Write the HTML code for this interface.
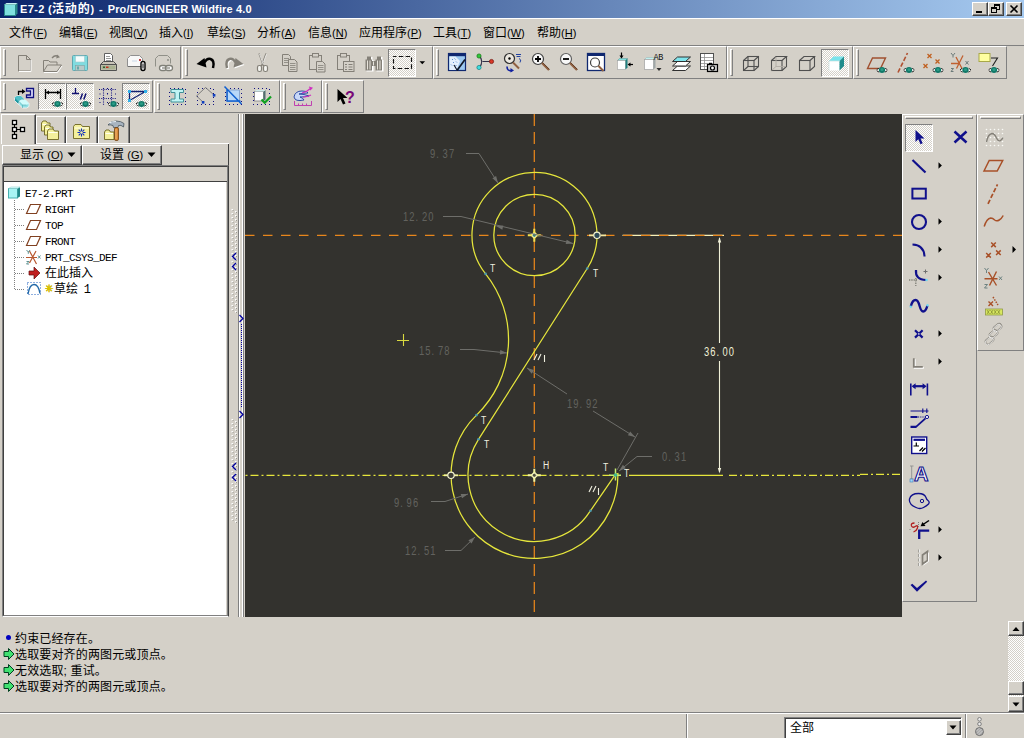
<!DOCTYPE html>
<html><head><meta charset="utf-8"><title>Pro/ENGINEER</title><style>
*{box-sizing:border-box;margin:0;padding:0}
html,body{width:1024px;height:738px;overflow:hidden;background:#d4d0c8;}
body{position:relative;font-family:"Liberation Sans","Noto Sans CJK SC",sans-serif;font-size:12px;color:#000;}
.a{position:absolute}
.tb{position:absolute;border-top:1px solid #fff;border-left:1px solid #fff;border-right:1px solid #808080;border-bottom:1px solid #808080;background:#d4d0c8}
.grip{position:absolute;width:3px;border-top:1px solid #fff;border-left:1px solid #fff;border-right:1px solid #808080;border-bottom:1px solid #808080}
.hgrip{position:absolute;height:3px;border-top:1px solid #fff;border-left:1px solid #fff;border-right:1px solid #808080;border-bottom:1px solid #808080}
.ic{position:absolute;width:28px;height:28px;overflow:visible}
.pr{position:absolute;width:28px;height:28px;border-top:1px solid #808080;border-left:1px solid #808080;border-right:1px solid #fff;border-bottom:1px solid #fff;
 background-color:#fff;background-image:linear-gradient(45deg,#d4d0c8 25%,transparent 25%,transparent 75%,#d4d0c8 75%),linear-gradient(45deg,#d4d0c8 25%,transparent 25%,transparent 75%,#d4d0c8 75%);background-size:2px 2px;background-position:0 0,1px 1px}
.menu span{position:absolute;top:0;white-space:nowrap;font-size:12px;line-height:14px}
.menu i{font-style:normal;font-size:11px}
.menu u{text-decoration:underline;text-underline-offset:1px}
.cj{font-family:"Liberation Sans","Noto Sans CJK SC",sans-serif}
.tree{font-family:"Liberation Mono","Noto Sans CJK SC",monospace;font-size:11px;letter-spacing:-0.6px;white-space:nowrap;line-height:14px;transform:scaleY(1.04);transform-origin:0 100%}
.tree.cj{font-family:"Liberation Sans","Noto Sans CJK SC",sans-serif;font-size:12px;letter-spacing:0;transform:none}
.tree.cj b{font-weight:normal;font-family:"Liberation Mono",monospace;font-size:12px;letter-spacing:-1.5px}
.msg{position:absolute;left:15px;font-size:12px;line-height:14px;white-space:nowrap;letter-spacing:0.15px}
.wb{position:absolute;top:2px;width:16px;height:14px;background:#d4d0c8;border-top:1px solid #fff;border-left:1px solid #fff;border-right:1px solid #404040;border-bottom:1px solid #404040;box-shadow:inset -1px -1px 0 #808080}
.raised{border-top:1px solid #fff;border-left:1px solid #fff;border-right:1px solid #404040;border-bottom:1px solid #404040;box-shadow:inset -1px -1px 0 #808080;background:#d4d0c8}
</style></head><body>
<div class="a" style="left:0;top:0;width:1024px;height:18px;background:linear-gradient(90deg,#0a246a,#a6caf0)"></div>
<svg class="a" style="left:3px;top:2px" width="16" height="15" viewBox="0 0 16 15"><rect x="1.5" y="2.5" width="11" height="11" fill="#7fe0e0" stroke="#2a8a8a"/><path d="M12.5 2.5l2 -1.5v10.5l-2 2z" fill="#2a8a8a"/><path d="M1.5 2.5l2-1.500h11l-2 1.500z" fill="#c8f4f4"/></svg>
<div id="ttl" class="a" style="left:20px;top:1.5px;font-size:11px;line-height:14px;font-weight:bold;color:#fff;white-space:nowrap;letter-spacing:0.2px"><span id="t1" style="letter-spacing:0.35px">E7-2 (</span><span id="t2" style="font-size:12px;letter-spacing:0.8px">活动的</span><span id="t3" style="letter-spacing:0.95px">) - </span><span id="t4" style="letter-spacing:0.14px">Pro/ENGINEER Wildfire 4.0</span></div>
<div class="wb" style="left:972px"><svg class="a" style="left:0;top:0" width="14" height="12"><rect x="3" y="8" width="6" height="2" fill="#000"/></svg></div>
<div class="wb" style="left:988px"><svg class="a" style="left:0;top:0" width="14" height="12" fill="none" stroke="#000"><rect x="5.500" y="1.500" width="5" height="5"/><path d="M5 2.500h6" /><rect x="2.500" y="4.500" width="5" height="5" fill="#d4d0c8"/><path d="M2 5.500h6"/></svg></div>
<div class="wb" style="left:1006px"><svg class="a" style="left:0;top:0" width="14" height="12" stroke="#000" stroke-width="1.6"><path d="M3.500 2.500l7 7M10.500 2.500l-7 7"/></svg></div>
<div class="a menu" style="left:0;top:18px;width:1024px;height:27px;background:#d4d0c8;border-top:1px solid #fff"></div>
<div class="a menu" style="left:9px;top:26px"><span>文件<i>(<u>F</u>)</i></span></div>
<div class="a menu" style="left:59px;top:26px"><span>编辑<i>(<u>E</u>)</i></span></div>
<div class="a menu" style="left:109px;top:26px"><span>视图<i>(<u>V</u>)</i></span></div>
<div class="a menu" style="left:159px;top:26px"><span>插入<i>(<u>I</u>)</i></span></div>
<div class="a menu" style="left:207px;top:26px"><span>草绘<i>(<u>S</u>)</i></span></div>
<div class="a menu" style="left:257px;top:26px"><span>分析<i>(<u>A</u>)</i></span></div>
<div class="a menu" style="left:308px;top:26px"><span>信息<i>(<u>N</u>)</i></span></div>
<div class="a menu" style="left:359px;top:26px"><span>应用程序<i>(<u>P</u>)</i></span></div>
<div class="a menu" style="left:433px;top:26px"><span>工具<i>(<u>T</u>)</i></span></div>
<div class="a menu" style="left:483px;top:26px"><span>窗口<i>(<u>W</u>)</i></span></div>
<div class="a menu" style="left:537px;top:26px"><span>帮助<i>(<u>H</u>)</i></span></div>
<div class="a" style="left:0;top:45px;width:1024px;height:1px;background:#808080"></div>
<div class="tb" style="left:0px;top:46px;width:181px;height:33px"></div>
<div class="grip" style="left:3px;top:49px;height:27px"></div>
<svg class="ic" style="left:10px;top:49px" viewBox="0 0 28 28"><path d="M8.500 6.500h8l4 4v11.500h-12z" fill="#d4d0c8" stroke="#848078"/><path d="M16.500 6.500v4h4" fill="none" stroke="#848078"/><path d="M9 22.500h12M21 11v11.500" stroke="#fff" fill="none"/></svg>
<svg class="ic" style="left:38px;top:49px" viewBox="0 0 28 28"><path d="M5.500 22.500v-11h5l1.500 1.500h7v3" fill="#d4d0c8" stroke="#848078"/><path d="M5.500 22.500l4 -6.500h14l-4.500 6.500z" fill="#d4d0c8" stroke="#848078"/><path d="M14 9q3 -3.500 6.500 -1.500" fill="none" stroke="#848078" stroke-width="1.300"/><path d="M19 5.500l3 2.800l-3.800 1.200z" fill="#848078"/><path d="M6 23.500h13.500l4.500 -6.500" stroke="#fff" fill="none"/></svg>
<svg class="ic" style="left:66px;top:49px" viewBox="0 0 28 28"><rect x="6.500" y="6.500" width="15" height="15" rx="1" fill="#80dce0" stroke="#60a8b0"/><rect x="9.500" y="7" width="9" height="6" fill="#f4fcfc" stroke="#a0c8cc" stroke-width="0.600"/><rect x="9.500" y="16.500" width="9" height="5" fill="#b8c8c8" stroke="#80a0a0" stroke-width="0.600"/><rect x="11" y="17.500" width="2" height="3" fill="#6aa"/></svg>
<svg class="ic" style="left:94px;top:49px" viewBox="0 0 28 28"><path d="M10.500 12.500v-8h6l2 2v6" fill="#fff" stroke="#606060"/><path d="M12 7.500h4M12 9.500h5M12 11.500h5" stroke="#808080" stroke-width="0.800"/><path d="M6.500 15.500l3 -3h10l3 3v6h-16z" fill="#c8c4b8" stroke="#505050"/><path d="M6.500 15.500h16" stroke="#505050"/><rect x="7.500" y="16.500" width="14" height="4" fill="#a8b090" stroke="none"/><rect x="9" y="17.500" width="2" height="1.500" fill="#306030"/><rect x="12" y="17.500" width="2.500" height="1.500" fill="#c03020"/></svg>
<svg class="ic" style="left:122px;top:49px" viewBox="0 0 28 28"><path d="M5.500 17.500v-8l3 -3h9l3 3v8z" fill="#f8f8f8" stroke="#909090"/><path d="M6 17.500h14" stroke="#707070"/><rect x="17" y="10" width="2" height="2" fill="#c04040"/><path d="M10 12h5" stroke="#c8d8e8"/><rect x="19" y="12.500" width="4" height="9" rx="2" fill="#fff" stroke="#000" stroke-width="1.400"/><path d="M21 14.500v5" stroke="#000" stroke-width="1"/></svg>
<svg class="ic" style="left:150px;top:49px" viewBox="0 0 28 28"><path d="M5.500 17.500v-8l3 -3h9l3 3v5" fill="#d4d0c8" stroke="#909088"/><rect x="17" y="10" width="2" height="2" fill="#a0a098"/><rect x="9.500" y="16.500" width="7" height="5" rx="2.500" fill="#fff" stroke="#808078" stroke-width="1.300"/><rect x="15.500" y="16.500" width="7" height="5" rx="2.500" fill="#fff" stroke="#808078" stroke-width="1.300"/><path d="M12 19h8" stroke="#808078" stroke-width="1.200"/></svg>
<div class="tb" style="left:182px;top:46px;width:251px;height:33px"></div>
<div class="grip" style="left:185px;top:49px;height:27px"></div>
<svg class="ic" style="left:192px;top:49px" viewBox="0 0 28 28"><path d="M12.500 13.500q2.500 -4.500 6 -3.500q4.500 1.500 2.500 9" fill="none" stroke="#000" stroke-width="2.500"/><path d="M4.500 15l8 -6l2 9.500z" fill="#000"/></svg>
<svg class="ic" style="left:220px;top:49px" viewBox="0 0 28 28"><path d="M16.500 14.500q-2.500 -4.500 -6 -3.500q-4.500 1.500 -2.500 9" fill="none" stroke="#fff" stroke-width="2.500"/><path d="M24.500 16l-8 -6l-2 9.500z" fill="#fff"/><path d="M15.500 13.500q-2.500 -4.500 -6 -3.500q-4.500 1.500 -2.500 9" fill="none" stroke="#848078" stroke-width="2.500"/><path d="M23.500 15l-8 -6l-2 9.500z" fill="#848078"/></svg>
<svg class="ic" style="left:248px;top:49px" viewBox="0 0 28 28"><path d="M11 4.500l3.800 10.500l-2.300 2.500M18 4.500l-3.800 10.500l2.300 2.500" fill="none" stroke="#848078" stroke-width="1.300"/><path d="M11.500 5l3.800 10.500M18.500 5l-3 8" fill="none" stroke="#fff" stroke-width="0.700"/><rect x="9.500" y="16.500" width="4" height="6" rx="1.800" fill="#f4f4f0" stroke="#848078" stroke-width="1.200"/><rect x="15.500" y="16.500" width="4" height="6" rx="1.800" fill="#f4f4f0" stroke="#848078" stroke-width="1.200"/></svg>
<svg class="ic" style="left:276px;top:49px" viewBox="0 0 28 28"><path d="M6.500 5.500h6l2 2v9h-8z" fill="#d4d0c8" stroke="#848078"/><path d="M8 9.500h5M8 11.500h5M8 13.500h5" stroke="#848078" stroke-width="0.800"/><path d="M12.500 10.500h6l2.500 2.500v9.500h-8.500z" fill="#d4d0c8" stroke="#848078"/><path d="M14 14.500h5.500M14 16.500h5.500M14 18.500h5.500M14 20.500h5.500" stroke="#848078" stroke-width="0.800"/></svg>
<svg class="ic" style="left:304px;top:49px" viewBox="0 0 28 28"><rect x="5.500" y="6.500" width="12" height="14" fill="#d4d0c8" stroke="#848078"/><rect x="8.500" y="4.500" width="6" height="3.500" fill="#d4d0c8" stroke="#848078"/><path d="M12.500 12.500h6l2.500 2.500v8h-8.500z" fill="#d4d0c8" stroke="#848078"/><path d="M14 16.500h5.500M14 18.500h5.500M14 20.500h5.500" stroke="#848078" stroke-width="0.800"/></svg>
<svg class="ic" style="left:332px;top:49px" viewBox="0 0 28 28"><rect x="5.500" y="6.500" width="12" height="14" fill="#d4d0c8" stroke="#848078"/><rect x="8.500" y="4.500" width="6" height="3.500" fill="#d4d0c8" stroke="#848078"/><rect x="11.500" y="12.500" width="10.500" height="10" fill="#d4d0c8" stroke="#848078"/><path d="M13 15.500h2M16.500 15.500h4M13 18h2M16.500 18h4M13 20.500h2M16.500 20.500h4" stroke="#848078" stroke-width="1.100"/></svg>
<svg class="ic" style="left:360px;top:49px" viewBox="0 0 28 28"><g fill="#fff"><rect x="6.500" y="11" width="7" height="11.500"/><rect x="16.500" y="11" width="7" height="11.500"/><rect x="8.500" y="8" width="4" height="4"/><rect x="18.500" y="8" width="4" height="4"/></g><g fill="#848078"><rect x="5.500" y="10.500" width="6.500" height="11"/><rect x="15.500" y="10.500" width="6.500" height="11"/><rect x="7" y="7.500" width="4" height="3.500"/><rect x="17" y="7.500" width="4" height="3.500"/><rect x="11.500" y="12" width="4.500" height="5"/></g><path d="M7.500 11.500v9M10 11.500v9M17.500 11.500v9M20 11.500v9M13.500 12.500v4" stroke="#e8e4dc" stroke-width="1"/></svg>
<div class="pr" style="left:388px;top:49px;height:28px"></div><svg class="ic" style="left:388px;top:49px" viewBox="0 0 28 28"><rect x="5.500" y="7.500" width="18" height="12" fill="none" stroke="#101010" stroke-width="1.150" stroke-dasharray="4.500 2.300" stroke-dashoffset="1.500"/></svg>
<svg class="a" style="left:419px;top:61px" width="7" height="4"><path d="M0.500 0.300h5.600l-2.800 3z" fill="#000"/></svg>
<div class="tb" style="left:433px;top:46px;width:294px;height:33px"></div>
<div class="grip" style="left:436px;top:49px;height:27px"></div>
<svg class="ic" style="left:443px;top:48px" viewBox="0 0 28 28"><rect x="5.500" y="5.500" width="17" height="17" fill="#9cc8f0" stroke="#102870" stroke-width="1.200"/><rect x="5" y="5" width="18" height="3.200" fill="#102870"/><path d="M6.500 22l0 -13.500h6l4.500 4.500l-3.500 9z" fill="#e4f0fc"/><path d="M14 22.500l8 -11" stroke="#101828" stroke-width="1.700"/><path d="M14 22l-3 -5" stroke="#101828" stroke-width="1.200"/><path d="M9 11l1 1M11.500 10.500l1 1M10 14l1 1M13 13.500l1 1M8 16.500l1 1M12.500 17l1 1" stroke="#6090d0" stroke-width="1"/></svg>
<svg class="ic" style="left:471px;top:48px" viewBox="0 0 28 28"><path d="M8.500 8q4.500 5.500 0 11.500M11.500 13.500h9" fill="none" stroke="#303048" stroke-width="1.200"/><circle cx="8" cy="8" r="2.100" fill="#30c838" stroke="#107010" stroke-width="0.700"/><circle cx="8" cy="19.500" r="2.100" fill="#40dce0" stroke="#108080" stroke-width="0.700"/><circle cx="20.500" cy="13.500" r="2.100" fill="#d83828" stroke="#701008" stroke-width="0.700"/></svg>
<svg class="ic" style="left:499px;top:48px" viewBox="0 0 28 28"><circle cx="10.500" cy="10.500" r="5" fill="#ece8e0" stroke="#303030" stroke-width="1.200"/><circle cx="10.500" cy="10.500" r="1.200" fill="#000"/><path d="M14 14.500l6 6" stroke="#906040" stroke-width="2"/><path d="M17 6.500h5M17.500 8.500h4M20 10.500q3 1 1 4" fill="none" stroke="#2040a0" stroke-width="1"/><path d="M8 18.500q0 5 5 4" fill="none" stroke="#1020a0" stroke-width="1.600"/><path d="M11.500 20l3.500 2.500l-3.500 2z" fill="#1020a0"/></svg>
<svg class="ic" style="left:526.5px;top:48px" viewBox="0 0 28 28"><circle cx="11" cy="11" r="5.500" fill="#f8f8f8" stroke="#404040" stroke-width="1.200"/><path d="M8 11h6M11 8v6" stroke="#000" stroke-width="1.800"/><path d="M15 15l7 7" stroke="#906040" stroke-width="2.200"/><path d="M15.500 14.500l7 7" stroke="#503020" stroke-width="0.700"/></svg>
<svg class="ic" style="left:554.5px;top:48px" viewBox="0 0 28 28"><circle cx="11" cy="11" r="5.500" fill="#f8f8f8" stroke="#606060" stroke-width="1.200"/><path d="M8 11h6" stroke="#000" stroke-width="1.800"/><path d="M15 15l7 7" stroke="#906040" stroke-width="2.200"/><path d="M15.500 14.500l7 7" stroke="#503020" stroke-width="0.700"/></svg>
<svg class="ic" style="left:582px;top:48px" viewBox="0 0 28 28"><rect x="5.500" y="5.500" width="17" height="17" fill="#fff" stroke="#102870" stroke-width="1.300"/><rect x="5" y="5" width="18" height="3" fill="#102870"/><circle cx="13" cy="14.500" r="4.500" fill="#fff" stroke="#404040" stroke-width="1.200"/><path d="M16.500 18l5 5" stroke="#906040" stroke-width="2"/></svg>
<svg class="ic" style="left:609.5px;top:48px" viewBox="0 0 28 28"><path d="M7.500 12.500l2 -2h8l-2 2z" fill="#80e0e0" stroke="#60a0a0" stroke-width="0.600"/><rect x="7.500" y="12.500" width="8" height="9" fill="#fff" stroke="#a0a0a0" stroke-width="0.600"/><path d="M15.500 12.500l2 -2v9l-2 2z" fill="#208080"/><path d="M11.500 4.500v5" stroke="#000" stroke-width="1.200"/><path d="M9.500 7.500h4l-2 3z" fill="#000"/><path d="M23 16.500h-4" stroke="#000" stroke-width="1.200"/><path d="M20.500 14.500v4l-3 -2z" fill="#000"/></svg>
<svg class="ic" style="left:637.5px;top:49px" viewBox="0 0 28 28"><path d="M6.500 10.500l2 -2h9l-2 2z" fill="#c0f0f0" stroke="#a0b8b8" stroke-width="0.600"/><rect x="6.500" y="10.500" width="9" height="10" fill="#fff" stroke="#a8a8a8" stroke-width="0.800"/><path d="M15.500 10.500l2 -2v10l-2 2z" fill="#a0a8a8"/><text x="15.500" y="10.500" font-size="8.500" font-family="Liberation Mono,monospace" fill="#101010" letter-spacing="-0.300">AB</text><path d="M18.500 19h5l-2.500 3z" fill="#303030"/></svg>
<svg class="ic" style="left:667px;top:49px" viewBox="0 0 28 28"><path d="M5.500 21.500l5 -4.500h13l-5 4.500z" fill="#fff" stroke="#303030"/><path d="M5.500 17l5 -4.500h13l-5 4.500z" fill="#fff" stroke="#303030"/><path d="M5.500 12.500l5 -4.500h13l-5 4.500z" fill="#80e4ec" stroke="#303030"/></svg>
<svg class="ic" style="left:695px;top:49px" viewBox="0 0 28 28"><rect x="5.500" y="4.500" width="13" height="16" fill="#fff" stroke="#505050"/><path d="M6 8.500h12M6 11.500h12M6 14.500h12M6 17.500h12M9.500 5v15" stroke="#909090" stroke-width="0.800"/><rect x="12.500" y="15.500" width="10" height="7" fill="#c8c8c8" stroke="#000" stroke-width="1.200"/><rect x="14" y="13.800" width="3" height="2" fill="#000"/><circle cx="17.500" cy="19" r="2" fill="#fff" stroke="#000" stroke-width="1.200"/></svg>
<div class="tb" style="left:727px;top:46px;width:126px;height:33px"></div>
<div class="grip" style="left:730px;top:49px;height:27px"></div>
<svg class="ic" style="left:737px;top:49px" viewBox="0 0 28 28"><g fill="none" stroke="#505050" stroke-width="1.100"><rect x="6.500" y="11.500" width="10.500" height="10"/><rect x="11" y="7.500" width="10.500" height="10"/><path d="M6.500 11.500l4.500 -4M17 11.500l4.500 -4M6.500 21.500l4.500 -4M17 21.500l4.500 -4"/></g></svg>
<svg class="ic" style="left:765px;top:49px" viewBox="0 0 28 28"><g fill="none" stroke="#505050" stroke-width="1.100"><rect x="6.500" y="11.500" width="10.500" height="10"/><path d="M6.500 11.500l4.500 -4h10.500l-4.500 4M21.500 7.500v10l-4.500 4"/><path d="M11 8v9.500h10M6.500 21.500l4.500 -4" stroke="#b0aca4" stroke-width="0.900"/></g></svg>
<svg class="ic" style="left:793px;top:49px" viewBox="0 0 28 28"><g fill="none" stroke="#505050" stroke-width="1.100"><rect x="6.500" y="11.500" width="10.500" height="10"/><path d="M6.500 11.500l4.500 -4h10.500l-4.500 4M21.500 7.500v10l-4.500 4"/></g></svg>
<div class="pr" style="left:821px;top:49px;height:28px"></div><svg class="ic" style="left:821px;top:49px" viewBox="0 0 28 28"><path d="M8 12l4.500 -4.500h10.500l-4.500 4.500z" fill="#78e4ec"/><rect x="8" y="12" width="10.500" height="9.500" fill="#fff"/><path d="M18.500 12l4.500 -4.500v9.500l-4.500 4.500z" fill="#208c8c"/><path d="M8 21.500v-9.500h10.500" fill="none" stroke="#c8e0e0" stroke-width="0.700"/></svg>
<div class="tb" style="left:853px;top:46px;width:154px;height:33px"></div>
<div class="grip" style="left:856px;top:49px;height:27px"></div>
<svg class="ic" style="left:863px;top:49px" viewBox="0 0 28 28"><path d="M4.500 19.500l5 -10.500h13l-5 10.500z" fill="none" stroke="#a05030" stroke-width="1.400"/><path d="M13.5 21q5.500 -5 11 0q-5.500 5 -11 0z" fill="#fff"/><path d="M13.5 21q1.200 -1.200 2.300 -1.600M24.5 21q-1.200 -1.200 -2.300 -1.600M14 21.8q1.200 1 2.200 1.200M24 21.8q-1.200 1 -2.200 1.200" stroke="#181818" stroke-width="1" fill="none"/><ellipse cx="19" cy="21" rx="3.200" ry="2.900" fill="#127868"/><ellipse cx="19" cy="20.7" rx="1.600" ry="1.400" fill="#2a9c86"/></svg>
<svg class="ic" style="left:891px;top:49px" viewBox="0 0 28 28"><path d="M7 23.500l9.500 -19.500" stroke="#b05030" stroke-width="1.600" stroke-dasharray="4.500 2"/><path d="M12.5 21q5.500 -5 11 0q-5.500 5 -11 0z" fill="#fff"/><path d="M12.5 21q1.200 -1.200 2.300 -1.600M23.5 21q-1.200 -1.200 -2.300 -1.600M13 21.8q1.200 1 2.200 1.200M23 21.8q-1.200 1 -2.200 1.200" stroke="#181818" stroke-width="1" fill="none"/><ellipse cx="18" cy="21" rx="3.200" ry="2.900" fill="#127868"/><ellipse cx="18" cy="20.7" rx="1.600" ry="1.400" fill="#2a9c86"/></svg>
<svg class="ic" style="left:919px;top:49px" viewBox="0 0 28 28"><path d="M8.500 5l4 4M12.500 5l-4 4M16.500 10.500l4 4M20.500 10.500l-4 4M4.500 15l4 4M8.500 15l-4 4" stroke="#c06020" stroke-width="1.300"/><path d="M13.5 21q5.500 -5 11 0q-5.500 5 -11 0z" fill="#fff"/><path d="M13.5 21q1.200 -1.200 2.300 -1.600M24.5 21q-1.200 -1.200 -2.300 -1.600M14 21.8q1.200 1 2.200 1.200M24 21.8q-1.200 1 -2.200 1.200" stroke="#181818" stroke-width="1" fill="none"/><ellipse cx="19" cy="21" rx="3.200" ry="2.900" fill="#127868"/><ellipse cx="19" cy="20.7" rx="1.600" ry="1.400" fill="#2a9c86"/></svg>
<svg class="ic" style="left:947px;top:49px" viewBox="0 0 28 28"><path d="M4 14.500h9M9 8l6.500 12.500M16 6.500l-6.500 13" stroke="#c06030" stroke-width="1.300"/><path d="M4 4l2 2.500l2 -2.500M6 6.500v2M18.500 12l3 3.500M21.500 12l-3 3.500M4 19.500h2.500l-2.500 3h2.500" fill="none" stroke="#607070" stroke-width="0.900"/><path d="M13.0 21q5.500 -5 11 0q-5.500 5 -11 0z" fill="#fff"/><path d="M13.0 21q1.200 -1.200 2.300 -1.600M24.0 21q-1.200 -1.200 -2.300 -1.600M13.5 21.8q1.200 1 2.200 1.200M23.5 21.8q-1.200 1 -2.200 1.200" stroke="#181818" stroke-width="1" fill="none"/><ellipse cx="18.5" cy="21" rx="3.200" ry="2.900" fill="#127868"/><ellipse cx="18.5" cy="20.7" rx="1.600" ry="1.400" fill="#2a9c86"/></svg>
<svg class="ic" style="left:975px;top:49px" viewBox="0 0 28 28"><rect x="4" y="4.500" width="11" height="8" fill="#ffffa0" stroke="#a8a848"/><path d="M16 9h6.500l-5 8" fill="none" stroke="#202020" stroke-width="1.100"/><path d="M13.5 21q5.500 -5 11 0q-5.500 5 -11 0z" fill="#fff"/><path d="M13.5 21q1.200 -1.200 2.300 -1.600M24.5 21q-1.200 -1.200 -2.300 -1.600M14 21.8q1.200 1 2.200 1.200M24 21.8q-1.200 1 -2.200 1.200" stroke="#181818" stroke-width="1" fill="none"/><ellipse cx="19" cy="21" rx="3.200" ry="2.900" fill="#127868"/><ellipse cx="19" cy="20.7" rx="1.600" ry="1.400" fill="#2a9c86"/></svg>
<div class="tb" style="left:0px;top:80px;width:153px;height:33px"></div>
<div class="grip" style="left:3px;top:83px;height:27px"></div>
<svg class="ic" style="left:10px;top:83px" viewBox="0 0 28 28"><path d="M16.500 5.500h7v9h-7v-2.500h4v-4h-4z" fill="#e0e0fc" stroke="#101080" stroke-width="1.300"/><path d="M8.500 12v-3.500h4.500" fill="none" stroke="#000" stroke-width="1.300"/><path d="M12 6l3.500 2.500l-3.500 2.500z" fill="#000"/><path d="M4.500 14.500l2.500 -1.500h4l3.500 3.500v3l-2.500 1.500h-4l-3.500 -3.500z" fill="#2098a0" stroke="#f8f8f8" stroke-width="0.800"/><path d="M4.500 14.500l2.500 -1.500h4l3.500 3.500l-2.500 1.500h-4z" fill="#50c0c8"/><path d="M9 18.500l2.500 -1.500h4l3.500 3.500v3l-2.500 1.500h-4l-3.500 -3.500z" fill="#90e0e4" stroke="#f8f8f8" stroke-width="0.800"/><path d="M9 18.500l2.500 -1.500h4l3.500 3.500l-2.500 1.500h-4z" fill="#d0fcfc"/><path d="M12.500 22l0 3M9 18.500l3.500 3.500h4" fill="none" stroke="#48a8b0" stroke-width="0.600"/></svg>
<div class="pr" style="left:38px;top:83px;height:27px"></div><svg class="ic" style="left:38px;top:83px" viewBox="0 0 28 28"><path d="M7.500 6v10M22.500 6v10M8 9.500h14" stroke="#000" stroke-width="1.300" fill="none"/><path d="M8 9.500l3 -2v4zM22 9.500l-3 -2v4z" fill="#000"/><path d="M14.0 21q5.500 -5 11 0q-5.500 5 -11 0z" fill="#fff"/><path d="M14.0 21q1.200 -1.200 2.300 -1.600M25.0 21q-1.200 -1.200 -2.300 -1.600M14.5 21.8q1.200 1 2.200 1.200M24.5 21.8q-1.200 1 -2.200 1.200" stroke="#181818" stroke-width="1" fill="none"/><ellipse cx="19.5" cy="21" rx="3.200" ry="2.900" fill="#127868"/><ellipse cx="19.5" cy="20.7" rx="1.600" ry="1.400" fill="#2a9c86"/></svg>
<div class="pr" style="left:66px;top:83px;height:27px"></div><svg class="ic" style="left:66px;top:83px" viewBox="0 0 28 28"><path d="M6 10.500h7M9.500 5v5.500" stroke="#101070" stroke-width="1.300"/><path d="M16.500 10.500l-2.200 6M20 10.500l-2.200 6" stroke="#101070" stroke-width="1.500"/><path d="M14.0 21q5.500 -5 11 0q-5.500 5 -11 0z" fill="#fff"/><path d="M14.0 21q1.200 -1.200 2.300 -1.600M25.0 21q-1.200 -1.200 -2.300 -1.600M14.5 21.8q1.200 1 2.200 1.200M24.5 21.8q-1.200 1 -2.200 1.200" stroke="#181818" stroke-width="1" fill="none"/><ellipse cx="19.5" cy="21" rx="3.200" ry="2.900" fill="#127868"/><ellipse cx="19.5" cy="20.7" rx="1.600" ry="1.400" fill="#2a9c86"/></svg>
<svg class="ic" style="left:94px;top:83px" viewBox="0 0 28 28"><path d="M5 6.500h17M5 15.500h17M9.500 5v17M17.500 5v17" stroke="#101080" stroke-width="1.100" stroke-dasharray="1 1.250"/><path d="M5.500 11h1M13 11h1M21 11h1M5.500 19.500h1M13 19.500h1M13.500 5v1M13.500 10v1" stroke="#101080" stroke-width="1.100"/><path d="M14.0 21q5.500 -5 11 0q-5.500 5 -11 0z" fill="#fff"/><path d="M14.0 21q1.200 -1.200 2.300 -1.600M25.0 21q-1.200 -1.200 -2.300 -1.600M14.5 21.8q1.200 1 2.200 1.200M24.5 21.8q-1.200 1 -2.200 1.200" stroke="#181818" stroke-width="1" fill="none"/><ellipse cx="19.5" cy="21" rx="3.200" ry="2.900" fill="#127868"/><ellipse cx="19.5" cy="20.7" rx="1.600" ry="1.400" fill="#2a9c86"/></svg>
<div class="pr" style="left:122px;top:83px;height:27px"></div><svg class="ic" style="left:122px;top:83px" viewBox="0 0 28 28"><path d="M7.500 8.500h16l-16 9z" fill="none" stroke="#102070" stroke-width="1.300"/><rect x="6" y="7" width="3" height="3" fill="#30b0e8"/><rect x="22" y="7" width="3" height="3" fill="#30b0e8"/><rect x="6" y="16" width="3" height="3" fill="#30b0e8"/><path d="M14.0 21q5.500 -5 11 0q-5.500 5 -11 0z" fill="#fff"/><path d="M14.0 21q1.200 -1.200 2.300 -1.600M25.0 21q-1.200 -1.200 -2.300 -1.600M14.5 21.8q1.200 1 2.200 1.200M24.5 21.8q-1.200 1 -2.200 1.200" stroke="#181818" stroke-width="1" fill="none"/><ellipse cx="19.5" cy="21" rx="3.200" ry="2.900" fill="#127868"/><ellipse cx="19.5" cy="20.7" rx="1.600" ry="1.400" fill="#2a9c86"/></svg>
<div class="tb" style="left:154px;top:80px;width:126px;height:33px"></div>
<div class="grip" style="left:157px;top:83px;height:27px"></div>
<svg class="ic" style="left:164px;top:83px" viewBox="0 0 28 28"><rect x="5.500" y="5.500" width="16" height="16" fill="none" stroke="#101080" stroke-width="1" stroke-dasharray="1 3" shape-rendering="crispEdges"/><path d="M7 6.500h12.500v3h-4v6.500h4v3h-12.500v-3h4v-6.500h-4z" fill="#c0f4f4" stroke="#409098" stroke-width="1"/></svg>
<svg class="ic" style="left:192px;top:83px" viewBox="0 0 28 28"><rect x="5.500" y="5.500" width="16" height="16" fill="none" stroke="#101080" stroke-width="1" stroke-dasharray="1 3" shape-rendering="crispEdges"/><path d="M13.500 4.500l-9 8.500l7 6.500M13.500 4.500l8.500 7.500" fill="none" stroke="#707070" stroke-width="0.900"/><rect x="9.800" y="18" width="2.600" height="2.600" fill="#1040c0"/><rect x="20.800" y="11" width="2.600" height="2.600" fill="#1040c0"/></svg>
<svg class="ic" style="left:220px;top:83px" viewBox="0 0 28 28"><rect x="5.500" y="5.500" width="16" height="16" fill="none" stroke="#101080" stroke-width="1" stroke-dasharray="1 3" shape-rendering="crispEdges"/><rect x="7.500" y="7" width="12" height="11.500" fill="#b8d8f8" stroke="#7898c8" stroke-width="0.800"/><path d="M7 5.500v12.500h13.500M4.500 3.500l17 17.500" fill="none" stroke="#1060d0" stroke-width="1.500"/></svg>
<svg class="ic" style="left:248px;top:83px" viewBox="0 0 28 28"><rect x="5.500" y="5.500" width="16" height="16" fill="none" stroke="#101080" stroke-width="1" stroke-dasharray="1 3" shape-rendering="crispEdges"/><rect x="6.500" y="8.500" width="9" height="9.500" fill="#fff" stroke="#909090"/><path d="M15.500 8.500l2 -1.500v9.500l-2 1.500z" fill="#507070"/><path d="M6.500 8.500l2 -1.500h9l-2 1.500z" fill="#d0ecec"/><path d="M13.500 16.500l3.200 3.200l6.300 -6.200" fill="none" stroke="#10a020" stroke-width="2.300"/></svg>
<div class="tb" style="left:280px;top:80px;width:42px;height:33px"></div>
<div class="grip" style="left:283px;top:83px;height:27px"></div>
<svg class="ic" style="left:289px;top:83px" viewBox="0 0 28 28"><path d="M5 14q1 -6 8 -6q6 0 6 2q-4 0 -9 1q5 0 10 2q-4 1 -9 1q3 1 4 3q-9 2 -10 -3z" fill="#c8d8f8" stroke="#2040a0" stroke-width="0.900"/><path d="M13 10q5 -1 9 -5M14 14q5 0 8 -2M20 4l3 1l-2 2" fill="none" stroke="#d030c0" stroke-width="1.100"/><path d="M5.500 18v4.500h17v-4.500M9.500 20.500v2M13.500 20.500v2M17.500 20.500v2" fill="none" stroke="#c040b0" stroke-width="1"/></svg>
<div class="tb" style="left:322px;top:80px;width:42px;height:33px"></div>
<div class="grip" style="left:325px;top:83px;height:27px"></div>
<svg class="ic" style="left:332px;top:83px" viewBox="0 0 28 28"><path d="M5.500 6v13l3 -3l2.500 5.500l2.500 -1l-2.500 -5.500h4.500z" fill="#000"/><text x="13" y="19.500" font-size="16" font-weight="bold" font-family="Liberation Sans,sans-serif" fill="#780878">?</text></svg>
<div class="a" style="left:0;top:114px;width:230px;height:503px;background:#d4d0c8"></div>
<div class="a" style="left:1px;top:114px;width:35px;height:30px;border-top:1px solid #fff;border-left:1px solid #fff;border-right:1px solid #404040;background:#d4d0c8;box-shadow:inset -1px 0 0 #808080"></div>
<div class="a" style="left:36px;top:116px;width:30px;height:27px;border-top:1px solid #fff;border-left:1px solid #fff;border-right:1px solid #404040;background:#d4d0c8;box-shadow:inset -1px 0 0 #808080"></div>
<div class="a" style="left:66px;top:116px;width:32px;height:27px;border-top:1px solid #fff;border-left:1px solid #fff;border-right:1px solid #404040;background:#d4d0c8;box-shadow:inset -1px 0 0 #808080"></div>
<div class="a" style="left:98px;top:116px;width:32px;height:27px;border-top:1px solid #fff;border-left:1px solid #fff;border-right:1px solid #404040;background:#d4d0c8;box-shadow:inset -1px 0 0 #808080"></div>
<div class="a" style="left:36px;top:143px;width:193px;height:1px;background:#fff"></div>
<div class="a" style="left:228px;top:144px;width:1px;height:22px;background:#404040"></div>
<svg class="a" style="left:0;top:114px" width="140" height="32" viewBox="0 114 140 32"><g fill="#fff" stroke="#000" stroke-width="1.300"><rect x="12.500" y="120.500" width="4" height="4"/><rect x="12.500" y="127.500" width="4" height="4"/><rect x="20.500" y="127.500" width="4" height="4"/><rect x="12.500" y="134.500" width="4" height="4"/></g><path d="M14.500 124.500v3M14.500 131.500v3M16.500 129.500h4" stroke="#000" stroke-width="1.100"/><path d="M41.5 123l1.500 -2h3l1.500 2h2.5v8h-8.5z" fill="#f4f09c" stroke="#6c6420" stroke-width="0.900"/><path d="M42.5 124.5h6.5" stroke="#fffff0" stroke-width="1"/><path d="M44.5 127l1.500 -2h3l1.500 2h2.5v8h-8.5z" fill="#f4f09c" stroke="#6c6420" stroke-width="0.900"/><path d="M45.5 128.5h6.5" stroke="#fffff0" stroke-width="1"/><path d="M47.5 131l1.500 -2h4l1.500 2h4v8.5h-11z" fill="#f4f09c" stroke="#6c6420" stroke-width="0.900"/><path d="M48.5 132.5h9" stroke="#fffff0" stroke-width="1"/><path d="M73.5 126.5l1.500 -2h6l1.500 2h7v12h-16z" fill="#f4f09c" stroke="#6c6420" stroke-width="0.900"/><path d="M74.5 128.0h14" stroke="#fffff0" stroke-width="1"/><path d="M81.500 128.500v8M77.500 132.500h8M78.700 129.700l5.600 5.600M84.300 129.700l-5.600 5.600" stroke="#1030c0" stroke-width="1.100"/><circle cx="81.500" cy="132.500" r="1.300" fill="#f4f09c"/><path d="M104.5 132l1.500 -2h3l1.500 2h3.5v7.5h-9.5z" fill="#f4f09c" stroke="#6c6420" stroke-width="0.900"/><path d="M105.5 133.5h7.5" stroke="#fffff0" stroke-width="1"/><path d="M108 125q2 -4 8 -4q5 0 8 2.500l-0.500 3.500q-2.500 -2.500 -5 -1.500l-0.500 2h-4.500l-0.500 -2q-2.500 -1 -5 -0.500z" fill="#a8b4c0" stroke="#48545c" stroke-width="0.800"/><path d="M109 123q3 -1.500 7 -1.500" stroke="#e8f0f8" stroke-width="1" fill="none"/><rect x="114.500" y="127.500" width="4" height="13" rx="1.500" fill="#d88838" stroke="#704010" stroke-width="0.800"/><path d="M116 129v10" stroke="#f0b870" stroke-width="1"/></svg>
<div class="a raised" style="left:2px;top:145px;width:80px;height:20px"></div>
<div class="a menu" style="left:20px;top:148px"><span>显示 <i>(<u>O</u>)</i></span></div>
<svg class="a" style="left:67px;top:152px" width="9" height="6"><path d="M0.500 0.500h8l-4 4.500z" fill="#000"/></svg>
<div class="a raised" style="left:82px;top:145px;width:80px;height:20px"></div>
<div class="a menu" style="left:100px;top:148px"><span>设置 <i>(<u>G</u>)</i></span></div>
<svg class="a" style="left:147px;top:152px" width="9" height="6"><path d="M0.500 0.500h8l-4 4.500z" fill="#000"/></svg>
<div class="a" style="left:2px;top:165px;width:227px;height:452px;border-top:1px solid #808080;border-left:1px solid #808080;border-right:1px solid #404040;border-bottom:1px solid #fff"></div>
<div class="a" style="left:3px;top:166px;width:225px;height:450px;border-top:1px solid #404040;border-left:1px solid #404040;border-right:1px solid #808080;border-bottom:1px solid #808080;background:#d4d0c8"></div>
<div class="a" style="left:4px;top:181px;width:223px;height:1px;background:#404040"></div>
<div class="a" style="left:4px;top:182px;width:222px;height:433px;background:#fff"></div>
<svg class="a" style="left:0;top:182px" width="60" height="120" fill="none" stroke="#808080" stroke-dasharray="1 1"><path d="M14.500 18v90M15 27.500h10M15 43.500h10M15 59.500h10M15 75.500h10M15 91.500h10M15 107.500h10"/></svg>
<svg class="a" style="left:5px;top:185px;overflow:visible" width="20" height="16" viewBox="0 0 20 16"><rect x="3.500" y="3.500" width="9" height="9.500" fill="#a8f4f4" stroke="#48b0b0"/><path d="M12.500 3.500l2.500 -1.500v9.500l-2.500 1.500z" fill="#208888"/><path d="M3.500 3.500l2.500 -1.500h9l-2.500 1.500z" fill="#e0ffff" stroke="#80c8c8" stroke-width="0.500"/></svg>
<div class="a tree" style="left:25px;top:187px">E7-2.PRT</div>
<svg class="a" style="left:25px;top:201px;overflow:visible" width="20" height="16" viewBox="0 0 20 16"><path d="M1.500 12.500l4 -9h10l-4 9z" fill="#fff" stroke="#804020" stroke-width="1.200"/></svg>
<div class="a tree" style="left:45px;top:203px">RIGHT</div>
<svg class="a" style="left:25px;top:217px;overflow:visible" width="20" height="16" viewBox="0 0 20 16"><path d="M1.500 12.500l4 -9h10l-4 9z" fill="#fff" stroke="#804020" stroke-width="1.200"/></svg>
<div class="a tree" style="left:45px;top:219px">TOP</div>
<svg class="a" style="left:25px;top:233px;overflow:visible" width="20" height="16" viewBox="0 0 20 16"><path d="M1.500 12.500l4 -9h10l-4 9z" fill="#fff" stroke="#804020" stroke-width="1.200"/></svg>
<div class="a tree" style="left:45px;top:235px">FRONT</div>
<svg class="a" style="left:25px;top:249px;overflow:visible" width="20" height="16" viewBox="0 0 20 16"><path d="M1 8.500h11M4.500 2l7 13M11 2l-6.500 12" stroke="#b85830" stroke-width="1.200" fill="none"/><path d="M1.500 1l1.800 2l1.800 -2M3.300 3v1.800M13 6.500l2.500 3M15.500 6.500l-2.500 3M1.500 12.500h2.500l-2.500 2.500h2.500" stroke="#508888" stroke-width="0.900" fill="none"/></svg>
<div class="a tree" style="left:45px;top:251px">PRT_CSYS_DEF</div>
<svg class="a" style="left:25px;top:265px;overflow:visible" width="20" height="16" viewBox="0 0 20 16"><path d="M4 6h5v-4l6 6l-6 6v-4h-5z" fill="#c02020" stroke="#601010" stroke-width="0.700"/></svg>
<div class="a tree cj" style="left:45px;top:266px">在此插入</div>
<svg class="a" style="left:25px;top:281px;overflow:visible" width="20" height="16" viewBox="0 0 20 16"><rect x="2.500" y="1.500" width="13" height="12" fill="none" stroke="#2060c0" stroke-dasharray="1 2"/><path d="M3 13q1.500 -9.500 6 -9.500q4.500 0 6 9" fill="none" stroke="#2068a8" stroke-width="1.400"/></svg>
<div class="a tree cj" style="left:54px;top:282px">草绘<b>&nbsp;1</b></div>
<div class="a" style="left:45px;top:283px;font-size:10px;font-weight:bold;color:#dcc400;line-height:12px;text-shadow:0 0 0.5px #a09000">✳</div>
<div class="a" style="left:230px;top:114px;width:15px;height:503px;background:#d4d0c8"></div>
<div class="a" style="left:238px;top:114px;width:1px;height:503px;background:#808080"></div><div class="a" style="left:239px;top:114px;width:1px;height:503px;background:#fff"></div>
<div class="a" style="left:242px;top:114px;width:1px;height:503px;background:#fff"></div><div class="a" style="left:243px;top:114px;width:1px;height:503px;background:#808080"></div>
<svg class="a" style="left:0;top:0" width="0" height="0"><defs><pattern id="dp" width="7" height="4" patternUnits="userSpaceOnUse"><rect x="0.500" y="0" width="1.500" height="1.500" fill="#fff"/><rect x="1.500" y="1" width="1" height="1" fill="#9c9a92"/><rect x="4" y="2" width="1.500" height="1.500" fill="#fff"/><rect x="5" y="3" width="1" height="1" fill="#9c9a92"/></pattern></defs></svg>
<svg class="a" style="left:231px;top:209px" width="7" height="104"><rect width="7" height="104" fill="url(#dp)"/></svg>
<svg class="a" style="left:231px;top:419px" width="7" height="104"><rect width="7" height="104" fill="url(#dp)"/></svg>
<svg class="a" style="left:231px;top:252px" width="7" height="9" fill="none" stroke="#0000a0" stroke-width="1.3"><path d="M5 1L1.500 4.500L5 8"/></svg>
<svg class="a" style="left:231px;top:262px" width="7" height="9" fill="none" stroke="#0000a0" stroke-width="1.3"><path d="M5 1L1.500 4.500L5 8"/></svg>
<svg class="a" style="left:231px;top:462px" width="7" height="9" fill="none" stroke="#0000a0" stroke-width="1.3"><path d="M5 1L1.500 4.500L5 8"/></svg>
<svg class="a" style="left:231px;top:473px" width="7" height="9" fill="none" stroke="#0000a0" stroke-width="1.3"><path d="M5 1L1.500 4.500L5 8"/></svg>
<svg class="a" style="left:238px;top:314px" width="7" height="9" fill="none" stroke="#0000a0" stroke-width="1.3"><path d="M1.500 1L5 4.500L1.500 8"/></svg>
<svg class="a" style="left:238px;top:409.5px" width="7" height="9" fill="none" stroke="#0000a0" stroke-width="1.3"><path d="M1.500 1L5 4.500L1.500 8"/></svg>
<div class="a" style="left:241px;top:324px;width:1px;height:84px;background-image:linear-gradient(#0000a0 50%,transparent 50%);background-size:1px 2px"></div>
<div class="a" style="left:245px;top:114px;width:657px;height:503px;background:#33322e"></div>
<svg class="a" style="left:245px;top:114px" width="657" height="503" viewBox="0 0 657 503" fill="none" font-family="Liberation Sans,sans-serif">
<path d="M377.5 121.3H479" stroke="#f6f0b8" stroke-width="1.25"/>
<path d="M289.3 0.0V503" stroke="#e8861c" stroke-width="1.25" stroke-dasharray="12 6"/>
<path d="M0.0 121.3H657" stroke="#e8861c" stroke-width="1.25" stroke-dasharray="9.500 8.500"/>
<path d="M0.0 361.3H367" stroke="#e6e63c" stroke-width="1.2" stroke-dasharray="8 3 2 3" stroke-dashoffset="10.500"/>
<path d="M384.0 361.3H478" stroke="#e6e63c" stroke-width="1.2"/>
<path d="M481.0 361.3H615" stroke="#e6e63c" stroke-width="1.2" stroke-dasharray="8 3 2 3" stroke-dashoffset="13"/>
<path d="M615.0 360.3H657" stroke="#e6e63c" stroke-width="1.2" stroke-dasharray="8 3 2 3" stroke-dashoffset="0"/>
<g stroke="#e6e63c" stroke-width="1.25">
<circle cx="289.5" cy="121" r="40.7"/>
<path d="M240.6 159.9A62.5 62.5 0 1 1 342.2 154.5L233.5 325.3A66.4 66.4 0 1 0 345.5 396.7L370.5 360.3"/>
<path d="M240.6 159.9A105.2 105.2 0 0 1 231.5 301.1A83.4 83.4 0 1 0 372.9 359.5L370.5 360.3"/>
</g>
<path d="M282.8 121.3h13M289.3 114.8v13" stroke="#f4e050" stroke-width="2"/>
<path d="M285.3 121.3L289.3 117.3L293.3 121.3L289.3 125.3z" fill="#f4e050"/>
<circle cx="289.29999999999995" cy="121.30000000000001" r="2" fill="#3a8070" stroke="#fafad8" stroke-width="0.8"/>
<path d="M282.8 361.3h13M289.3 354.8v13" stroke="#f4f4a0" stroke-width="2"/>
<path d="M285.3 361.3L289.3 357.3L293.3 361.3L289.3 365.3z" fill="#f4f4a0"/>
<circle cx="289.29999999999995" cy="361.3" r="2" fill="#4a4a38" stroke="#fafad8" stroke-width="0.8"/>
<path d="M344.0 121.3h7M356.0 121.3h5" stroke="#f4e8a0" stroke-width="1.8"/><circle cx="352" cy="121.30000000000001" r="3.2" stroke="#f4f4d0" stroke-width="1.2" fill="#2e4a58"/>
<path d="M199.0 361.3h14" stroke="#f4f4a0" stroke-width="1.8"/><circle cx="206" cy="361.3" r="3.2" stroke="#f4f4d0" stroke-width="1.2" fill="#3c3c34"/>
<path d="M364.0 361.3h12M370.5 354.5v12" stroke="#c8f070" stroke-width="1.5"/><circle cx="370.5" cy="361" r="1.8" fill="#40b890"/>
<circle cx="240.6" cy="159.9" r="1.3" fill="#4a9ab0"/>
<circle cx="342.2" cy="154.5" r="1.3" fill="#4a9ab0"/>
<circle cx="231.5" cy="301.1" r="1.3" fill="#4a9ab0"/>
<circle cx="233.5" cy="325.3" r="1.3" fill="#4a9ab0"/>
<circle cx="345.5" cy="396.7" r="1.3" fill="#4a9ab0"/>
<path d="M152.0 226.5h12M158.5 220.0v12" stroke="#d8d840" stroke-width="1.1"/>
<g stroke="#6e6e6a" stroke-width="1">
<path d="M221.0 39.5h13L253.0 69.0"/>
<path d="M198.0 102.5h18L328.0 129.5"/>
<path d="M215.0 235.5h14L262.0 239.0"/>
<path d="M186.0 387.5h14L223.0 380.0"/>
<path d="M200.0 436.5h16L230.0 423.0"/>
<path d="M282.0 254.0L322.0 280.0M348.0 297.0L390.0 323.0"/>
<path d="M372.0 356.0L393.0 319.0"/>
<path d="M374.0 357.0L392.0 342.5h15"/>
</g>
<path d="M253.0 69.0L247.4 64.3L251.1 61.9z" fill="#6e6e6a"/>
<path d="M328.0 129.5L320.7 130.0L321.7 125.7z" fill="#6e6e6a"/>
<path d="M251.0 112.0L258.3 111.5L257.3 115.8z" fill="#6e6e6a"/>
<path d="M262.0 239.0L254.8 240.5L255.3 236.1z" fill="#6e6e6a"/>
<path d="M223.0 380.0L217.0 384.3L215.7 380.1z" fill="#6e6e6a"/>
<path d="M230.0 423.0L226.5 429.4L223.4 426.3z" fill="#6e6e6a"/>
<path d="M282.0 254.0L289.1 256.0L286.7 259.7z" fill="#6e6e6a"/>
<path d="M390.0 323.0L382.9 321.2L385.2 317.4z" fill="#6e6e6a"/>
<path d="M374.0 357.0L377.9 350.8L380.8 354.2z" fill="#6e6e6a"/>
<text transform="translate(185 44) scale(0.78 1)" x="0.00 8.08 16.15 24.23" y="0" fill="#62625e" font-size="12">9.37</text>
<text transform="translate(158 107) scale(0.78 1)" x="0.00 8.08 16.15 24.23 32.31" y="0" fill="#62625e" font-size="12">12.20</text>
<text transform="translate(174 241) scale(0.78 1)" x="0.00 8.08 16.15 24.23 32.31" y="0" fill="#62625e" font-size="12">15.78</text>
<text transform="translate(322 294) scale(0.78 1)" x="0.00 8.08 16.15 24.23 32.31" y="0" fill="#62625e" font-size="12">19.92</text>
<text transform="translate(417 347) scale(0.78 1)" x="0.00 8.08 16.15 24.23" y="0" fill="#62625e" font-size="12">0.31</text>
<text transform="translate(149 393) scale(0.78 1)" x="0.00 8.08 16.15 24.23" y="0" fill="#62625e" font-size="12">9.96</text>
<text transform="translate(160 441) scale(0.78 1)" x="0.00 8.08 16.15 24.23 32.31" y="0" fill="#62625e" font-size="12">12.51</text>
<path d="M474.5 124.0V229M474.5 247.0V358" stroke="#f0f0d8" stroke-width="1.1"/>
<path d="M474.5 123.0L476.2 128.5L472.8 128.5z" fill="#f0f0d8"/>
<path d="M474.5 359.5L472.8 354.0L476.2 354.0z" fill="#f0f0d8"/>
<text transform="translate(459 242) scale(0.78 1)" x="0.00 7.95 15.90 23.85 31.79" y="0" fill="#f0f0d8" font-size="12">36.00</text>
<text transform="translate(245 158) scale(0.78 1)" x="0.00" y="0" fill="#f0f0e0" font-size="11">T</text>
<text transform="translate(348 163) scale(0.78 1)" x="0.00" y="0" fill="#f0f0e0" font-size="11">T</text>
<text transform="translate(236 310) scale(0.78 1)" x="0.00" y="0" fill="#f0f0e0" font-size="11">T</text>
<text transform="translate(239 334) scale(0.78 1)" x="0.00" y="0" fill="#f0f0e0" font-size="11">T</text>
<text transform="translate(298 355) scale(0.78 1)" x="0.00" y="0" fill="#f0f0e0" font-size="11">H</text>
<text transform="translate(358 357) scale(0.78 1)" x="0.00" y="0" fill="#f0f0e0" font-size="11">T</text>
<text transform="translate(379 363) scale(0.78 1)" x="0.00" y="0" fill="#f0f0e0" font-size="11">T</text>
<path d="M289.0 246.0l3 -6M293.0 246.0l3 -6M299.5 241.0v7" stroke="#f0f0e0" stroke-width="1.1"/>
<path d="M344.0 378.0l3 -6M348.0 378.0l3 -6M353.5 374.0v7" stroke="#f0f0e0" stroke-width="1.1"/>
</svg>
<div class="tb" style="left:902px;top:114px;width:75px;height:488px"></div>
<div class="hgrip" style="left:905px;top:116px;width:68px"></div>
<div class="pr" style="left:905px;top:124px;height:28px"></div><svg class="ic" style="left:905px;top:124px" viewBox="0 0 28 28"><path d="M10.500 6v12l2.800 -2.800l2.200 5l2.200 -1l-2.200 -4.800h4z" fill="#10108c"/></svg>
<svg class="ic" style="left:905px;top:152px" viewBox="0 0 28 28"><path d="M7.500 8l13 12.500" stroke="#10108c" stroke-width="2.200"/></svg>
<svg class="a" style="left:937.5px;top:162px" width="5" height="7"><path d="M0.500 0.300l3.400 3.200l-3.400 3.200z" fill="#000"/></svg>
<svg class="ic" style="left:905px;top:180px" viewBox="0 0 28 28"><rect x="7.400" y="8.700" width="13.400" height="9.800" fill="none" stroke="#10108c" stroke-width="2"/></svg>
<svg class="ic" style="left:905px;top:208px" viewBox="0 0 28 28"><circle cx="14" cy="14" r="7" fill="none" stroke="#10108c" stroke-width="2.100"/></svg>
<svg class="a" style="left:937.5px;top:218px" width="5" height="7"><path d="M0.500 0.300l3.400 3.200l-3.400 3.200z" fill="#000"/></svg>
<svg class="ic" style="left:905px;top:236px" viewBox="0 0 28 28"><path d="M7.500 8.500q11.500 0.500 12 12" fill="none" stroke="#10108c" stroke-width="2.100"/></svg>
<svg class="a" style="left:937.5px;top:246px" width="5" height="7"><path d="M0.500 0.300l3.400 3.200l-3.400 3.200z" fill="#000"/></svg>
<svg class="ic" style="left:905px;top:264px" viewBox="0 0 28 28"><path d="M11 6q-1 9.500 10 10" fill="none" stroke="#10108c" stroke-width="2.200"/><path d="M4 16h8M10.800 14v8" stroke="#808078" stroke-width="1.300" stroke-dasharray="1.300 1"/><path d="M18.500 7.500h4M20.500 5.500v4" stroke="#707070" stroke-width="1"/><circle cx="21.500" cy="16" r="1.300" fill="#70d8f0"/></svg>
<svg class="a" style="left:937.5px;top:274px" width="5" height="7"><path d="M0.500 0.300l3.400 3.200l-3.400 3.200z" fill="#000"/></svg>
<svg class="ic" style="left:905px;top:292px" viewBox="0 0 28 28"><path d="M5.800 14.500q1.500 -6.500 4.800 -6.500q2.500 0 4 6q1.500 5.500 3.500 5.500q2.800 0 4.300 -6" fill="none" stroke="#10108c" stroke-width="2.300"/><circle cx="5.800" cy="14.800" r="1.200" fill="#70d8f0"/><circle cx="22.500" cy="13.300" r="1.200" fill="#70d8f0"/></svg>
<svg class="ic" style="left:905px;top:320px" viewBox="0 0 28 28"><path d="M10 10.200l7.600 7.400M17.600 10.200l-7.600 7.400" stroke="#10108c" stroke-width="2.200"/><circle cx="13.800" cy="13.900" r="0.900" fill="#c0c0e0"/></svg>
<svg class="a" style="left:937.5px;top:330px" width="5" height="7"><path d="M0.500 0.300l3.400 3.200l-3.400 3.200z" fill="#000"/></svg>
<svg class="ic" style="left:905px;top:348px" viewBox="0 0 28 28"><path d="M9.800 11.300v8.600h9" fill="none" stroke="#fff" stroke-width="1.800"/><path d="M8.800 10.300v8.600h9" fill="none" stroke="#848078" stroke-width="1.800"/></svg>
<svg class="a" style="left:937.5px;top:358px" width="5" height="7"><path d="M0.500 0.300l3.400 3.200l-3.400 3.200z" fill="#000"/></svg>
<svg class="ic" style="left:905px;top:376px" viewBox="0 0 28 28"><path d="M5.800 7.500v12M22.400 7.500v12" stroke="#10108c" stroke-width="1.600"/><path d="M8 10.200h12" stroke="#10108c" stroke-width="2.200"/><path d="M6.600 10.200l4 -3v6zM21.600 10.200l-4 -3v6z" fill="#10108c"/></svg>
<svg class="ic" style="left:905px;top:404px" viewBox="0 0 28 28"><path d="M5.500 7h18M17.800 4.500v4.500M21.800 4.500v4.500" fill="none" stroke="#10108c" stroke-width="1.100"/><path d="M5.500 13h7M5.500 22.800h6" stroke="#10108c" stroke-width="2.200"/><path d="M11 22.800l9.500 -8.500" stroke="#10108c" stroke-width="1.800"/><path d="M13 13h7.500" stroke="#10108c" stroke-width="1.200" stroke-dasharray="1.200 1"/><circle cx="22" cy="13" r="1.600" fill="#fff" stroke="#10108c" stroke-width="1"/></svg>
<svg class="ic" style="left:905px;top:432px" viewBox="0 0 28 28"><rect x="6.700" y="5" width="15" height="16.500" fill="#fff" stroke="#10108c" stroke-width="1.400"/><rect x="8.500" y="6.700" width="11.500" height="2.200" fill="#10108c"/><path d="M8.500 14h5.500M11.300 10.500v3.500" stroke="#000" stroke-width="1.200"/><path d="M14.500 19l3.500 -3.500M17 19.500l3.500 -3.500" stroke="#000" stroke-width="1.300"/></svg>
<svg class="ic" style="left:905px;top:460px" viewBox="0 0 28 28"><text x="9" y="20.500" font-size="20" font-weight="bold" font-family="Liberation Sans,sans-serif" fill="#fff" stroke="#10108c" stroke-width="1.100">A</text><path d="M6.700 6v13M5 6h3.500M5 19h3.500" stroke="#909090" stroke-width="0.900" fill="none"/><rect x="5" y="19" width="3" height="3" fill="#a0d8f8" stroke="#4080c0" stroke-width="0.600"/></svg>
<svg class="ic" style="left:905px;top:488px" viewBox="0 0 28 28"><path d="M4.500 11q1.500 -5.500 9 -5.500q6 0 7.500 4q0.500 2 2 3q2 1.500 0.500 3.500q-2 2 -5 3.500q-3.500 2 -7.500 0q-7.500 -3.500 -6.500 -8.500z" fill="none" stroke="#10108c" stroke-width="1.300"/><circle cx="17" cy="13" r="1.700" fill="none" stroke="#10108c" stroke-width="1"/></svg>
<svg class="ic" style="left:905px;top:516px" viewBox="0 0 28 28"><path d="M9.500 7q-4 0 -3 3q1.500 2.500 4.500 0q2 -1 1.500 2q-1 3 -4 4" fill="none" stroke="#b02020" stroke-width="1.300"/><path d="M14.200 14v9M13.200 14.600h11" stroke="#10108c" stroke-width="2.300" fill="none"/><path d="M24 4.500l-6 4" stroke="#000" stroke-width="1.500"/><path d="M15.500 10.300l2 -4.300l3 4z" fill="#000"/><path d="M4.500 13.500h1.500M13.500 6v5" stroke="#808080" stroke-width="1" stroke-dasharray="1 1"/></svg>
<svg class="a" style="left:937.5px;top:526px" width="5" height="7"><path d="M0.500 0.300l3.400 3.200l-3.400 3.200z" fill="#000"/></svg>
<svg class="ic" style="left:905px;top:544px" viewBox="0 0 28 28"><path d="M14.500 5.500v16.500" stroke="#fff" stroke-width="1.200" stroke-dasharray="3 1.500"/><path d="M13.700 5.500v16.500" stroke="#909088" stroke-width="0.900" stroke-dasharray="3 1.500"/><path d="M17.500 11l5 -3.500v9l-5 3.500z" fill="none" stroke="#848078" stroke-width="1.700"/><path d="M18.500 21l5 -3.500v-9" fill="none" stroke="#fff" stroke-width="0.900"/></svg>
<svg class="a" style="left:937.5px;top:554px" width="5" height="7"><path d="M0.500 0.300l3.400 3.200l-3.400 3.200z" fill="#000"/></svg>
<svg class="ic" style="left:905px;top:572px" viewBox="0 0 28 28"><path d="M5.500 13l1.800 -1.200l4.700 4.200l9 -7.500l1.200 1.200l-10.200 10z" fill="#10108c"/></svg>
<svg class="ic" style="left:946px;top:123px" viewBox="0 0 28 28"><path d="M8.500 8.500l12 11M20.500 8.500l-12 11" stroke="#10108c" stroke-width="2.500"/></svg>
<div class="tb" style="left:977px;top:114px;width:47px;height:237px"></div>
<div class="hgrip" style="left:980px;top:116px;width:41px"></div>
<svg class="ic" style="left:980px;top:124px" viewBox="0 0 28 28"><g fill="#fafaf6"><circle cx="6.5" cy="5.5" r="0.800"/><circle cx="10.5" cy="5.5" r="0.800"/><circle cx="14.5" cy="5.5" r="0.800"/><circle cx="18.5" cy="5.5" r="0.800"/><circle cx="22.5" cy="5.5" r="0.800"/><circle cx="6.5" cy="9.5" r="0.800"/><circle cx="10.5" cy="9.5" r="0.800"/><circle cx="14.5" cy="9.5" r="0.800"/><circle cx="18.5" cy="9.5" r="0.800"/><circle cx="22.5" cy="9.5" r="0.800"/><circle cx="6.5" cy="13.5" r="0.800"/><circle cx="10.5" cy="13.5" r="0.800"/><circle cx="14.5" cy="13.5" r="0.800"/><circle cx="18.5" cy="13.5" r="0.800"/><circle cx="22.5" cy="13.5" r="0.800"/><circle cx="6.5" cy="17.5" r="0.800"/><circle cx="10.5" cy="17.5" r="0.800"/><circle cx="14.5" cy="17.5" r="0.800"/><circle cx="18.5" cy="17.5" r="0.800"/><circle cx="22.5" cy="17.5" r="0.800"/><circle cx="6.5" cy="21.5" r="0.800"/><circle cx="10.5" cy="21.5" r="0.800"/><circle cx="14.5" cy="21.5" r="0.800"/><circle cx="18.5" cy="21.5" r="0.800"/><circle cx="22.5" cy="21.5" r="0.800"/></g><path d="M6.500 18q1.500 -8 5.500 -8.500q2.500 0 4.500 4.500q2 4 4 2.500q1.500 -1 2.500 -3" fill="none" stroke="#848078" stroke-width="1.400"/></svg>
<svg class="ic" style="left:980px;top:152px" viewBox="0 0 28 28"><path d="M4 19l5.200 -10.500h13.500l-5.500 10.500z" fill="none" stroke="#a85028" stroke-width="1.500"/></svg>
<svg class="ic" style="left:980px;top:180px" viewBox="0 0 28 28"><path d="M8 23.800l9.500 -19.400" stroke="#a85028" stroke-width="1.700" stroke-dasharray="4.500 2"/></svg>
<svg class="ic" style="left:980px;top:208px" viewBox="0 0 28 28"><path d="M4.200 18.500q2.500 -8 6.500 -8.500q2 0 4 2q2 1.500 4.500 0q2.500 -1.500 4 -4.500" fill="none" stroke="#a85028" stroke-width="1.500"/></svg>
<svg class="ic" style="left:980px;top:236px" viewBox="0 0 28 28"><path d="M11.200 6.500l4.600 4.600M15.800 6.500l-4.600 4.600M16.100 14.400l4.600 4.600M20.700 14.400l-4.600 4.600M6.200 17l4.600 4.600M10.800 17l-4.600 4.600" stroke="#a85028" stroke-width="1.500"/></svg>
<svg class="ic" style="left:980px;top:264px" viewBox="0 0 28 28"><path d="M4.500 14.800h13M8.500 8l8 13.500M16.500 7.500l-7 14" stroke="#a85028" stroke-width="1.400" fill="none"/><path d="M4.500 4l2 2.500l2 -2.500M6.500 6.500v2.500M19 12.500l3 3.500M22 12.500l-3 3.500M4.500 20.500h3l-3 3.500h3" fill="none" stroke="#607878" stroke-width="0.900"/></svg>
<svg class="ic" style="left:980px;top:292px" viewBox="0 0 28 28"><path d="M8.500 9.500l4.500 4.500M13 9.500l-4.500 4.500" stroke="#a85028" stroke-width="1.400"/><path d="M13 5l5 8" stroke="#a85028" stroke-width="1.500" stroke-dasharray="1.500 1.200"/><rect x="5.500" y="17" width="17" height="6" fill="#d8e860" stroke="#909848" stroke-width="0.800"/><path d="M7 18l2.500 4M10.500 18l2.500 4M14 18l2.500 4M17.500 18l2.500 4M9.500 18l-2.500 4M13 18l-2.500 4M16.500 18l-2.500 4M20 18l-2.500 4" stroke="#808830" stroke-width="0.700"/></svg>
<svg class="ic" style="left:980px;top:320px" viewBox="0 0 28 28"><g fill="none" stroke="#848078" stroke-width="1.500"><rect x="13" y="5" width="9" height="5" rx="2.500" transform="rotate(-40 17.500 7.500)"/><rect x="9" y="11.500" width="9" height="5" rx="2.500" transform="rotate(-40 13.500 14)"/><rect x="5" y="18" width="9" height="5" rx="2.500" transform="rotate(-40 9.500 20.500)"/></g><g fill="none" stroke="#fff" stroke-width="0.700"><rect x="13" y="5" width="9" height="5" rx="2.500" transform="rotate(-40 18 8)"/><rect x="9" y="11.500" width="9" height="5" rx="2.500" transform="rotate(-40 14 14.500)"/><rect x="5" y="18" width="9" height="5" rx="2.500" transform="rotate(-40 10 21)"/></g></svg>
<svg class="a" style="left:1012px;top:246px" width="5" height="7"><path d="M0.500 0l3.500 3.500l-3.500 3.500z" fill="#000"/></svg>
<div class="a" style="left:0;top:617px;width:1024px;height:95px;background:#d4d0c8"></div>
<div class="a" style="left:6px;top:635px;width:5px;height:5px;border-radius:50%;background:#0000c0"></div>
<div class="msg" style="top:631.5px">约束已经存在。</div>
<svg class="a" style="left:3px;top:648px" width="12" height="12" viewBox="0 0 12 12"><path d="M1 3.500h4.500v-3l5.500 5.500l-5.500 5.500v-3h-4.500z" fill="#40e070" stroke="#004020" stroke-width="1"/></svg>
<div class="msg" style="top:647.5px">选取要对齐的两图元或顶点。</div>
<svg class="a" style="left:3px;top:664px" width="12" height="12" viewBox="0 0 12 12"><path d="M1 3.500h4.500v-3l5.500 5.500l-5.500 5.500v-3h-4.500z" fill="#40e070" stroke="#004020" stroke-width="1"/></svg>
<div class="msg" style="top:663.5px">无效选取; 重试。</div>
<svg class="a" style="left:3px;top:680px" width="12" height="12" viewBox="0 0 12 12"><path d="M1 3.500h4.500v-3l5.500 5.500l-5.500 5.500v-3h-4.500z" fill="#40e070" stroke="#004020" stroke-width="1"/></svg>
<div class="msg" style="top:679.5px">选取要对齐的两图元或顶点。</div>
<div class="a" style="left:1008px;top:621px;width:16px;height:91px;background-color:#fff;background-image:linear-gradient(45deg,#d4d0c8 25%,transparent 25%,transparent 75%,#d4d0c8 75%),linear-gradient(45deg,#d4d0c8 25%,transparent 25%,transparent 75%,#d4d0c8 75%);background-size:2px 2px;background-position:0 0,1px 1px"></div>
<div class="a raised" style="left:1008px;top:621px;width:16px;height:15px"><svg class="a" style="left:3px;top:3.500px" width="9" height="6"><path d="M0.500 5h7l-3.500 -4z" fill="#000"/></svg></div>
<div class="a raised" style="left:1008px;top:681px;width:16px;height:14px"></div>
<div class="a raised" style="left:1008px;top:696px;width:16px;height:16px"><svg class="a" style="left:3px;top:5px" width="9" height="6"><path d="M0.500 0.500h7l-3.500 4z" fill="#000"/></svg></div>
<div class="a" style="left:0;top:712px;width:1024px;height:1px;background:#808080"></div><div class="a" style="left:0;top:713px;width:1024px;height:1px;background:#fff"></div>
<div class="a" style="left:686px;top:714px;width:1px;height:24px;background:#808080"></div><div class="a" style="left:687px;top:714px;width:1px;height:24px;background:#fff"></div>
<div class="a" style="left:965px;top:714px;width:1px;height:24px;background:#808080"></div><div class="a" style="left:966px;top:714px;width:1px;height:24px;background:#fff"></div>
<div class="a" style="left:784px;top:717px;width:178px;height:22px;background:#fff;border-top:1px solid #808080;border-left:1px solid #808080;border-right:1px solid #fff;box-shadow:inset 1px 1px 0 #404040"></div>
<div class="a" style="left:790px;top:720.500px;font-size:12px;line-height:14px">全部</div>
<div class="a raised" style="left:946px;top:720px;width:15px;height:15px"><svg class="a" style="left:2px;top:4px" width="9" height="6"><path d="M0.500 0.500h7l-3.500 4z" fill="#000"/></svg></div>
<svg class="a" style="left:973px;top:717px" width="14" height="21" viewBox="0 0 14 21"><circle cx="6.500" cy="2.300" r="1.800" fill="#ececec" stroke="#808080"/><circle cx="6.500" cy="7" r="1.800" fill="#ececec" stroke="#808080"/><circle cx="6.500" cy="14.600" r="4" fill="#a8a8a8" stroke="#707070"/><path d="M4 16.500l4.500 -4.500M5.500 18l4.500 -4.500M3.500 14l3 -3" stroke="#e0e0e0" stroke-width="0.700"/></svg>
</body></html>
